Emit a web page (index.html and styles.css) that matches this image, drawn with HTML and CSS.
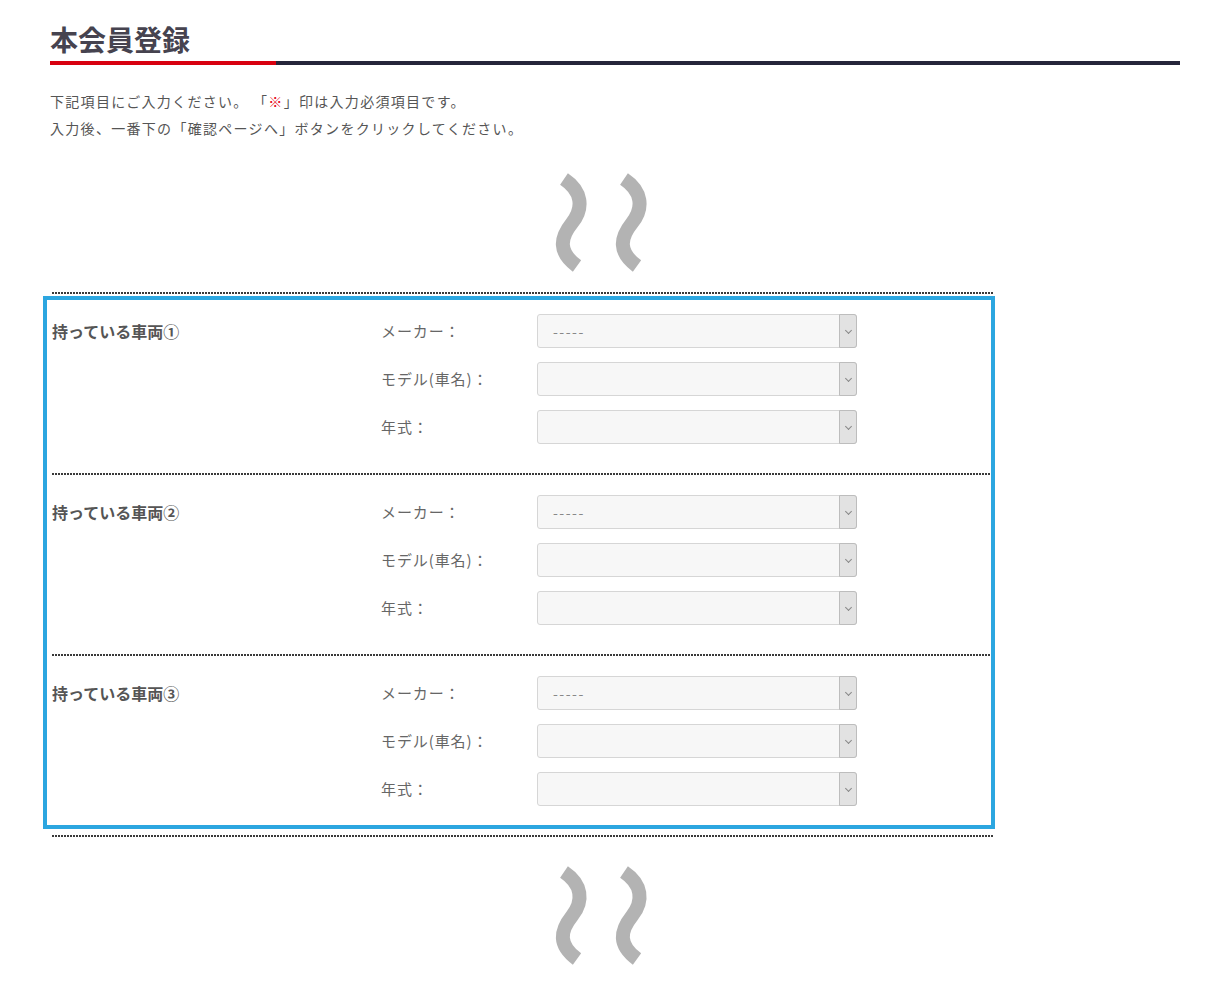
FILE: index.html
```html
<!DOCTYPE html>
<html lang="ja">
<head>
	<meta charset="UTF-8">
	<meta name="viewport" content="width=device-width, initial-scale=1.0">
	<title>本会員登録</title>
	<link rel="stylesheet" href="styles.css">
</head>
<body>
	<div class="page">
		<h1 class="title">本会員登録</h1>
		<div class="title__line"><span></span></div>

		<p class="intro">
			下記項目にご入力ください。 「<span class="req">※</span>」印は入力必須項目です。<br>
			入力後、一番下の「確認ページへ」ボタンをクリックしてください。
		</p>

		<svg class="wave" viewBox="0 0 100 100" width="100" height="100">
			<path d="M14 7 C32 19, 34 36, 22 51 C10 66, 8 80, 27 94" />
			<path d="M74 7 C92 19, 94 36, 82 51 C70 66, 68 80, 87 94" />
		</svg>

		<div class="cars">
			<div class="car">
				<div class="car__name">持っている車両①</div>
				<div class="car__fields">
					<div class="field"><label>メーカー：</label><div class="select"><span>-----</span><i class="select__btn"></i></div></div>
					<div class="field"><label>モデル(車名)：</label><div class="select"><span></span><i class="select__btn"></i></div></div>
					<div class="field"><label>年式：</label><div class="select"><span></span><i class="select__btn"></i></div></div>
				</div>
			</div>
			<div class="car">
				<div class="car__name">持っている車両②</div>
				<div class="car__fields">
					<div class="field"><label>メーカー：</label><div class="select"><span>-----</span><i class="select__btn"></i></div></div>
					<div class="field"><label>モデル(車名)：</label><div class="select"><span></span><i class="select__btn"></i></div></div>
					<div class="field"><label>年式：</label><div class="select"><span></span><i class="select__btn"></i></div></div>
				</div>
			</div>
			<div class="car">
				<div class="car__name">持っている車両③</div>
				<div class="car__fields">
					<div class="field"><label>メーカー：</label><div class="select"><span>-----</span><i class="select__btn"></i></div></div>
					<div class="field"><label>モデル(車名)：</label><div class="select"><span></span><i class="select__btn"></i></div></div>
					<div class="field"><label>年式：</label><div class="select"><span></span><i class="select__btn"></i></div></div>
				</div>
			</div>
			<div class="cars__end"></div>
			<div class="highlight"></div>
		</div>

		<svg class="wave wave--bottom" viewBox="0 0 100 100" width="100" height="100">
			<path d="M14 7 C32 19, 34 36, 22 51 C10 66, 8 80, 27 94" />
			<path d="M74 7 C92 19, 94 36, 82 51 C70 66, 68 80, 87 94" />
		</svg>
	</div>
</body>
</html>
```

FILE: styles.css
```css
body {
	margin: 0;
	font-family: "Noto Sans CJK JP", "Noto Sans", sans-serif;
	color: #555;
	background: #fff;
}
.page {
	padding: 0 44px 0 50px;
}
.title {
	margin: 0;
	padding-top: 22px;
	padding-bottom: 5px;
	font-size: 28px;
	line-height: 34px;
	font-weight: bold;
	color: #46434f;
}
.title__line {
	height: 4px;
	background: #25253a;
}
.title__line span {
	display: block;
	width: 226px;
	height: 4px;
	background: #d8000f;
}
.intro {
	margin: 23px 0 0;
	font-size: 14px;
	line-height: 27px;
	letter-spacing: 1.3px;
	color: #555;
}
.req {
	color: #e60012;
}
.wave {
	display: block;
	margin: 30px 0 0 500px;
}
.wave path {
	fill: none;
	stroke: #b3b3b3;
	stroke-width: 14;
}
.wave--bottom {
	margin-top: 28px;
}
.cars {
	position: relative;
	width: 941px;
	margin: 20px 0 0 2px;
}
.car,
.cars__end {
	height: 2px;
	background: repeating-linear-gradient(to right, #3a3a3a 0 2px, transparent 2px 3px) top left / 100% 2px no-repeat;
}
.car {
	height: auto;
	display: flex;
	padding: 22px 0 29px;
}
.car__name {
	width: 329px;
	font-size: 16px;
	font-weight: bold;
	line-height: 34px;
	color: #555;
}
.car__fields {
	display: flex;
	flex-direction: column;
	gap: 14px;
}
.field {
	display: flex;
	align-items: center;
}
.field label {
	width: 156px;
	font-size: 15px;
	letter-spacing: 0.06em;
	line-height: 34px;
	color: #666;
}
.select {
	position: relative;
	box-sizing: border-box;
	width: 320px;
	height: 34px;
	border: 1px solid #d6d6d6;
	border-radius: 3px;
	background: #f7f7f7;
	font-size: 14px;
	letter-spacing: 1.5px;
	line-height: 32px;
	color: #888;
}
.select span {
	padding-left: 15px;
}
.select__btn {
	position: absolute;
	top: -1px;
	right: -1px;
	bottom: -1px;
	width: 18px;
	box-sizing: border-box;
	border: 1px solid #bdbdbd;
	border-radius: 0 3px 3px 0;
	background: #e2e2e2;
}
.select__btn::after {
	content: "";
	position: absolute;
	top: 13px;
	left: 6px;
	width: 4px;
	height: 4px;
	border-right: 1.5px solid #888;
	border-bottom: 1.5px solid #888;
	transform: rotate(45deg);
}
.highlight {
	position: absolute;
	top: 4px;
	left: -9px;
	right: -2px;
	bottom: 8px;
	border: 4px solid #2ca6e0;
	pointer-events: none;
}
```
